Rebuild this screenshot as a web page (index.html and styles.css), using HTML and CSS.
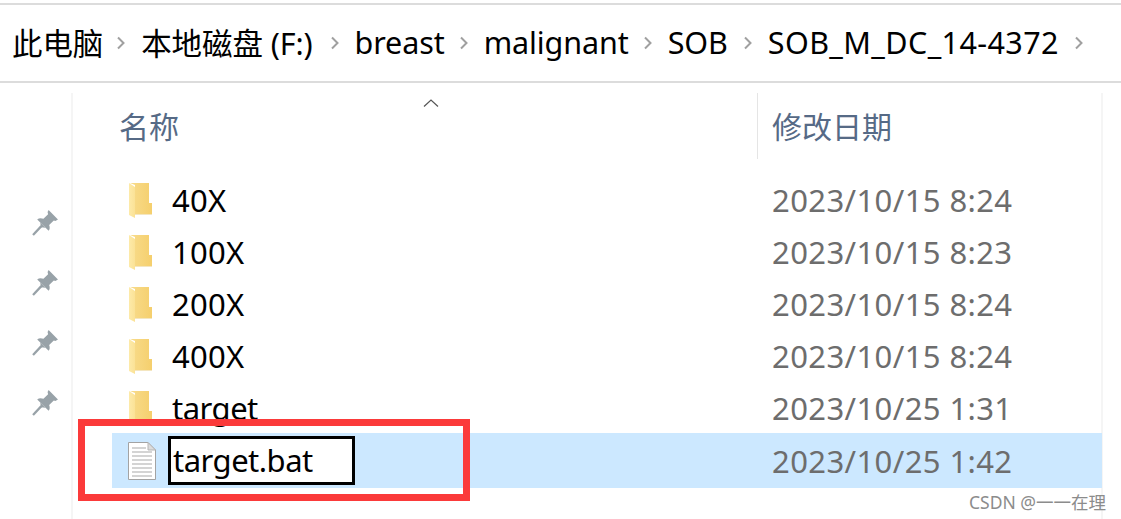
FILE: index.html
```html
<!DOCTYPE html>
<html lang="zh-CN">
<head>
<meta charset="utf-8">
<title>target.bat</title>
<link rel="stylesheet" href="styles.css">
</head>
<body>
<svg class="defs" width="0" height="0" aria-hidden="true">
  <defs>
    <linearGradient id="fback" x1="0" x2="1" y1="0" y2="0"><stop offset="0" stop-color="#f8dc8c"/><stop offset="1" stop-color="#f5cf6d"/></linearGradient>
    <linearGradient id="ffront" x1="0" x2="1" y1="0" y2="0"><stop offset="0" stop-color="#fdeaa9"/><stop offset="1" stop-color="#fbe296"/></linearGradient>
    <symbol id="folder" viewBox="0 0 24 36">
      <path d="M2 0H21V20H24V31H7V2Z" fill="url(#fback)"/>
      <path d="M1 0L7 4V35L1 32Z" fill="url(#ffront)"/>
      <path d="M7 31H24V32H7Z" fill="#f4e6c0"/>
    </symbol>
    <symbol id="pin" viewBox="0 0 26 26">
      <path d="M16 1L25 10L22.500 11.500L21 11L16.500 15.500C17.500 18 17 20 16 21L5 10C6.500 9 8.500 8.500 11 9.500L15.500 5L15 3Z" fill="#98a2a8"/>
      <path d="M1 25L9 16.500" stroke="#98a2a8" stroke-width="2.200" fill="none"/>
      <path d="M8 13L13 18L8.500 17.500Z" fill="#98a2a8"/>
    </symbol>
  </defs>
</svg>
<nav class="crumbs">
  <span class="tight-2">此电脑</span><svg class="chev" viewBox="0 0 10 14"><path d="M2 1.500L7.500 7L2 12.500"/></svg>
  <span class="loose-2">本地磁盘 (F:)</span><svg class="chev" viewBox="0 0 10 14"><path d="M2 1.500L7.500 7L2 12.500"/></svg>
  <span class="tight-1">breast</span><svg class="chev" viewBox="0 0 10 14"><path d="M2 1.500L7.500 7L2 12.500"/></svg>
  <span class="tight-1">malignant</span><svg class="chev" viewBox="0 0 10 14"><path d="M2 1.500L7.500 7L2 12.500"/></svg>
  <span>SOB</span><svg class="chev" viewBox="0 0 10 14"><path d="M2 1.500L7.500 7L2 12.500"/></svg>
  <span class="wide">SOB_M_DC_14-4372</span><svg class="chev" viewBox="0 0 10 14"><path d="M2 1.500L7.500 7L2 12.500"/></svg>
</nav>
<main class="pane">
  <aside class="pins">
    <svg class="pin"><use href="#pin"/></svg>
    <svg class="pin"><use href="#pin"/></svg>
    <svg class="pin"><use href="#pin"/></svg>
    <svg class="pin"><use href="#pin"/></svg>
  </aside>
  <section class="list">
    <header class="head">
      <div class="h-name">名称<svg class="sort" viewBox="0 0 16 8"><path d="M1 7.500L8 1L15 7.500"/></svg></div>
      <div class="h-date">修改日期</div>
    </header>
    <div class="row"><svg class="folder"><use href="#folder"/></svg><span class="name num">40X</span><span class="date">2023/10/15 8:24</span></div>
    <div class="row"><svg class="folder"><use href="#folder"/></svg><span class="name num">100X</span><span class="date">2023/10/15 8:23</span></div>
    <div class="row"><svg class="folder"><use href="#folder"/></svg><span class="name num">200X</span><span class="date">2023/10/15 8:24</span></div>
    <div class="row"><svg class="folder"><use href="#folder"/></svg><span class="name num">400X</span><span class="date">2023/10/15 8:24</span></div>
    <div class="row"><svg class="folder"><use href="#folder"/></svg><span class="name">target</span><span class="date">2023/10/25 1:31</span></div>
    <div class="row selected">
      <svg class="file" viewBox="0 0 28 38">
        <path d="M.500.500H20L27.500 8V37.500H.500Z" fill="#fff" stroke="#a3a3a3"/>
        <path d="M20 .500V8H27.500Z" fill="#dcdcdc" stroke="#b5b5b5"/>
        <path d="M4 6H18M4 10H24M4 14H24M4 18H24M4 22H24M4 26H24M4 30H24M4 34H24" stroke="#a9a9a9" stroke-width="1.200"/>
      </svg>
      <span class="name rename">target.bat</span><span class="date">2023/10/25 1:42</span>
    </div>
  </section>
</main>
<div class="redbox"></div>
<div class="mark">CSDN @一一在理</div>
</body>
</html>
```
FILE: styles.css
```css
* { box-sizing: border-box; }
html, body { margin: 0; height: 100%; }
body {
  position: relative;
  width: 1121px;
  height: 519px;
  overflow: hidden;
  background: #fff;
  font-family: "Noto Sans", "Noto Sans CJK SC", sans-serif;
  color: #000;
}
.defs { position: absolute; }
.crumbs {
  margin-top: 3px;
  height: 80px;
  border-top: 2px solid #dcdcdc;
  border-bottom: 2px solid #dcdcdc;
  display: flex;
  align-items: center;
  gap: 15px;
  padding-left: 12px;
  padding-bottom: 3px;
  font-size: 30.5px;
  letter-spacing: -0.1px;
  white-space: nowrap;
}
.wide { letter-spacing: 0.4px; }
.tight-2 { margin-right: -2px; }
.tight-1 { margin-right: -1px; }
.loose-2 { margin-right: 2px; }
.chev { width: 10px; height: 14px; flex: none; margin-top: 3px; }
.chev path { fill: none; stroke: #a0a0a0; stroke-width: 2; }
.pane {
  display: flex;
  height: 436px;
  padding-top: 10px;
  padding-right: 18px;
}
.pins {
  width: 73px;
  flex: none;
  border-right: 2px solid #f5f5f5;
  display: flex;
  flex-direction: column;
  gap: 34px;
  padding: 116px 0 0 32px;
}
.pin { width: 27px; height: 27px; display: block; margin-bottom: -1px; }
.list {
  flex: 1;
  border-right: 2px solid #f5f5f5;
  padding-left: 39px;
  padding-right: 0;
}
.head {
  height: 66px;
  display: grid;
  grid-template-columns: 645px 1fr;
  color: #566a86;
  font-size: 30px;
  margin-bottom: 14px;
}
.h-name { position: relative; padding: 10px 0 0 7px; }
.h-date { border-left: 1px solid #e5e5e5; padding: 10px 0 0 14px; }
.sort { position: absolute; left: 311px; top: 6px; width: 16px; height: 8px; }
.sort path { fill: none; stroke: #555; stroke-width: 1.200; }
.row {
  display: grid;
  grid-template-columns: 60px 585px 1fr;
  align-items: center;
  height: 52px;
  font-size: 31px;
}
.folder { width: 24px; height: 36px; margin-left: 16px; margin-top: 4px; }
.name { letter-spacing: -0.5px; padding-top: 2px; }
.num { letter-spacing: 0.3px; }
.date { color: #6d6d6d; padding: 2px 0 0 15px; letter-spacing: 0.4px; }
.selected {
  height: 55px;
  background: #cce8ff;
  margin-right: -1px;
}
.selected .date { padding-top: 0; }
.file { width: 28px; height: 38px; margin-left: 16px; }
.rename {
  width: 187px;
  height: 49px;
  border: 3px solid #000;
  background: #fff;
  margin-left: -4px;
  padding: 0 0 0 2px;
  line-height: 42px;
}
.redbox {
  position: absolute;
  left: 78px;
  top: 419px;
  width: 392px;
  height: 82px;
  border: 7px solid #fb3a3a;
}
.mark {
  position: absolute;
  right: 15px;
  top: 489px;
  font-size: 17.5px;
  color: #8c8c8c;
}
```
